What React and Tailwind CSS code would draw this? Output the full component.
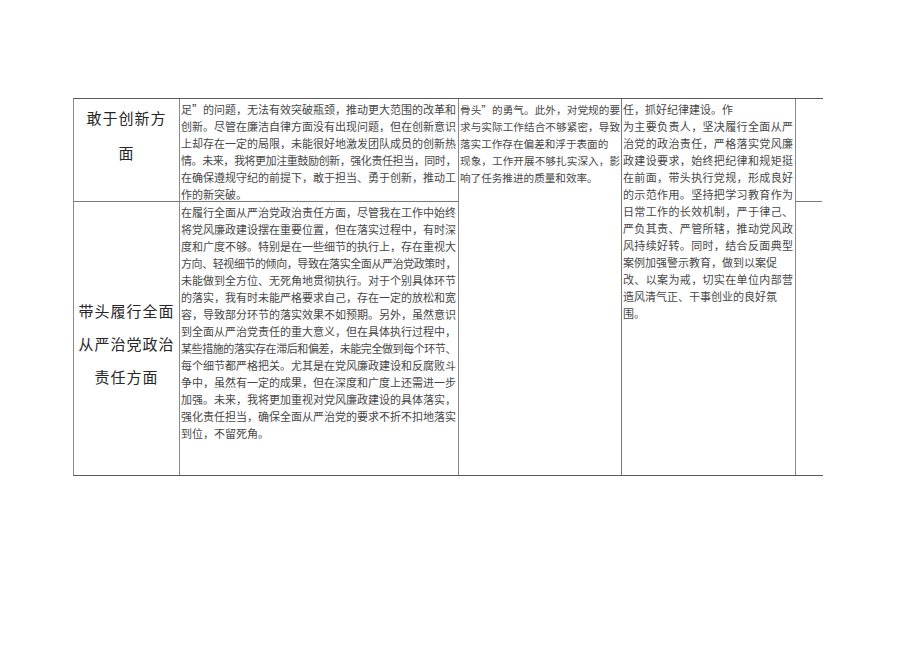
import React from "react";

const FONT = { fontFamily: '"Noto Sans CJK SC", "Noto Sans", sans-serif' };

function Lines({ lines, size }) {
  return (
    <div className="flex flex-col">
      {lines.map(([t, j, tight], i) => (
        <div
          key={i}
          className={
            "h-[17px] leading-[17px] whitespace-nowrap text-[#474747] " +
            (size || "text-[11px] ") +
            (tight ? " tracking-[-0.45px] " : " ") +
            (j ? "text-justify [text-align-last:justify]" : "text-left")
          }
        >
          {t}
        </div>
      ))}
    </div>
  );
}

const r1c2 = [
  ["足”的问题，无法有效突破瓶颈，推动更大范围的改革和", true],
  ["创新。尽管在廉洁自律方面没有出现问题，但在创新意识", true],
  ["上却存在一定的局限，未能很好地激发团队成员的创新热", true],
  ["情。未来，我将更加注重鼓励创新，强化责任担当，同时，", true, true],
  ["在确保遵规守纪的前提下，敢于担当、勇于创新，推动工", true],
  ["作的新突破。", false],
];

const r2c2 = [
  ["在履行全面从严治党政治责任方面，尽管我在工作中始终", true],
  ["将党风廉政建设摆在重要位置，但在落实过程中，有时深", true],
  ["度和广度不够。特别是在一些细节的执行上，存在重视大", true],
  ["方向、轻视细节的倾向，导致在落实全面从严治党政策时，", true, true],
  ["未能做到全方位、无死角地贯彻执行。对于个别具体环节", true],
  ["的落实，我有时未能严格要求自己，存在一定的放松和宽", true],
  ["容，导致部分环节的落实效果不如预期。另外，虽然意识", true],
  ["到全面从严治党责任的重大意义，但在具体执行过程中，", true],
  ["某些措施的落实存在滞后和偏差，未能完全做到每个环节、", true, true],
  ["每个细节都严格把关。尤其是在党风廉政建设和反腐败斗", true],
  ["争中，虽然有一定的成果，但在深度和广度上还需进一步", true],
  ["加强。未来，我将更加重视对党风廉政建设的具体落实，", true],
  ["强化责任担当，确保全面从严治党的要求不折不扣地落实", true],
  ["到位，不留死角。", false],
];

const c3 = [
  ["骨头”的勇气。此外，对党规的要", true],
  ["求与实际工作结合不够紧密，导致", true],
  ["落实工作存在偏差和浮于表面的", false],
  ["现象，工作开展不够扎实深入，影", true],
  ["响了任务推进的质量和效率。", false],
];

const c4 = [
  ["任，抓好纪律建设。作", false],
  ["为主要负责人，坚决履行全面从严", true],
  ["治党的政治责任，严格落实党风廉", true],
  ["政建设要求，始终把纪律和规矩挺", true],
  ["在前面，带头执行党规，形成良好", true],
  ["的示范作用。坚持把学习教育作为", true],
  ["日常工作的长效机制，严于律己、", true],
  ["严负其责、严管所辖，推动党风政", true],
  ["风持续好转。同时，结合反面典型", true],
  ["案例加强警示教育，做到以案促", false],
  ["改、以案为戒，切实在单位内部营", true],
  ["造风清气正、干事创业的良好氛", false],
  ["围。", false],
];

function Heading({ lines, lh }) {
  return (
    <div className="flex flex-col items-center">
      {lines.map((t, i) => (
        <div
          key={i}
          className={
            "text-[15px] tracking-[1px] text-[#262626] whitespace-nowrap " + lh
          }
        >
          {t}
        </div>
      ))}
    </div>
  );
}

export default function App() {
  return (
    <div className="w-[920px] h-[651px] bg-white" style={FONT}>
      <div className="pt-[98px] pl-[73px]">
        <div className="grid w-[749px] grid-cols-[106px_279px_163px_174px_26px] grid-rows-[103px_273px] border-t border-b border-l border-t-[#5a5a5a] border-b-[#5a5a5a] border-l-[#8a8a8a] box-content">
          {/* row 1 col 1 */}
          <div className="col-start-1 row-start-1 border-r border-b border-r-[#8a8a8a] border-b-[#7a7a7a] pt-[1px]">
            <Heading lines={["敢于创新方", "面"]} lh="h-[35px] leading-[35px]" />
          </div>
          {/* row 1 col 2 */}
          <div className="col-start-2 row-start-1 border-r border-b border-r-[#8a8a8a] border-b-[#7a7a7a] pl-[1px] pr-[2px] pt-[2px]">
            <Lines lines={r1c2} />
          </div>
          {/* col 3 spanning */}
          <div className="col-start-3 row-start-1 row-span-2 border-r border-r-[#7a7a7a] pl-[1px] pr-[1px] pt-[2px]">
            <Lines lines={c3} size="text-[10.6px]" />
          </div>
          {/* col 4 spanning */}
          <div className="col-start-4 row-start-1 row-span-2 border-r border-r-[#8a8a8a] pl-[1px] pr-[2px] pt-[2px]">
            <Lines lines={c4} />
          </div>
          {/* row 1 col 5 */}
          <div className="col-start-5 row-start-1 border-b border-b-[#7a7a7a]" />
          {/* row 2 col 1 */}
          <div className="col-start-1 row-start-2 border-r border-r-[#8a8a8a] pt-[92px]">
            <Heading
              lines={["带头履行全面", "从严治党政治", "责任方面"]}
              lh="h-[33px] leading-[33px]"
            />
          </div>
          {/* row 2 col 2 */}
          <div className="col-start-2 row-start-2 border-r border-r-[#8a8a8a] pl-[1px] pr-[2px] pt-[2px]">
            <Lines lines={r2c2} />
          </div>
          {/* row 2 col 5 */}
          <div className="col-start-5 row-start-2" />
        </div>
      </div>
    </div>
  );
}
